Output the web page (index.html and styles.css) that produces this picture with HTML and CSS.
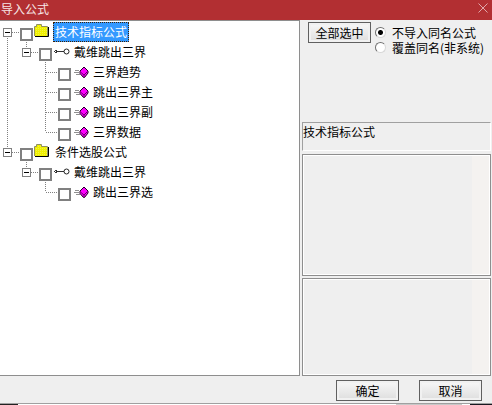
FILE: index.html
```html
<!DOCTYPE html>
<html lang="zh-CN">
<head>
    <meta charset="UTF-8">
    <meta name="viewport" content="width=device-width, initial-scale=1.0">
    <title>导入公式</title>
    <link rel="stylesheet" href="styles.css">
</head>
<body>
    <!-- Shared icons -->
    <svg class="symbols" aria-hidden="true">
        <defs>
            <pattern id="hatch" width="2" height="2" patternUnits="userSpaceOnUse">
                <path d="M0 0H2V2H0Z" fill="#f0f000"/>
                <path d="M0 0H1V1H0Z" fill="#f4f440"/>
            </pattern>
        </defs>
        <symbol id="folder" viewBox="0 0 17 15">
            <path d="M1 2H3V1H7V2H8V3H14V12H1Z" fill="url(#hatch)" shape-rendering="crispEdges"/>
            <path d="M.5 12V2.5H2.5V.5H7.5V2.5H13.5V12" fill="none" stroke="#909060"/>
            <path d="M1 12.5H14.5V3" fill="none" stroke="#000"/>
        </symbol>
        <symbol id="group" viewBox="0 0 17 15">
            <path d="M2 6.5H4M1 7.5H11M2 8.5H4" fill="none" stroke="#333" shape-rendering="crispEdges"/>
            <path d="M2 7H3V8H2Z" fill="#fff"/>
            <circle cx="13.5" cy="7.5" r="2.5" fill="#fff" stroke="#222"/>
        </symbol>
        <symbol id="formula" viewBox="0 0 17 15">
            <path d="M3 6.5H7M2 8.5H7M4 10.5H8" fill="none" stroke="#909090" shape-rendering="crispEdges"/>
            <path d="M12 3L16 7V9L12.500 13.500H11.500L8 9.500V7Z" fill="#f0f" stroke="#200020"/>
            <path d="M9 8.500L12 11L15.500 7.500M12 11V13" fill="none" stroke="#700070"/>
        </symbol>
    </svg>

    <header class="titlebar">
        <h1>导入公式</h1>
        <button type="button" class="close" aria-label="关闭">
            <svg viewBox="0 0 10 10"><path d="M.5 .5L9.5 9.5M9.5 .5L.5 9.5"/></svg>
        </button>
    </header>

    <main class="content">
        <!-- Formula tree -->
        <div class="tree-panel">
            <ul class="tree">
                <li>
                    <div class="row">
                        <button type="button" class="toggle" aria-label="折叠"></button>
                        <input type="checkbox" id="n1">
                        <svg class="icon"><use href="#folder"/></svg>
                        <label for="n1" class="selected">技术指标公式</label>
                    </div>
                    <ul>
                        <li>
                            <div class="row">
                                <button type="button" class="toggle" aria-label="折叠"></button>
                                <input type="checkbox" id="n2">
                                <svg class="icon"><use href="#group"/></svg>
                                <label for="n2">戴维跳出三界</label>
                            </div>
                            <ul>
                                <li>
                                    <div class="row leaf">
                                        <input type="checkbox" id="n3">
                                        <svg class="icon"><use href="#formula"/></svg>
                                        <label for="n3">三界趋势</label>
                                    </div>
                                </li>
                                <li>
                                    <div class="row leaf">
                                        <input type="checkbox" id="n4">
                                        <svg class="icon"><use href="#formula"/></svg>
                                        <label for="n4">跳出三界主</label>
                                    </div>
                                </li>
                                <li>
                                    <div class="row leaf">
                                        <input type="checkbox" id="n5">
                                        <svg class="icon"><use href="#formula"/></svg>
                                        <label for="n5">跳出三界副</label>
                                    </div>
                                </li>
                                <li>
                                    <div class="row leaf">
                                        <input type="checkbox" id="n6">
                                        <svg class="icon"><use href="#formula"/></svg>
                                        <label for="n6">三界数据</label>
                                    </div>
                                </li>
                            </ul>
                        </li>
                    </ul>
                </li>
                <li>
                    <div class="row">
                        <button type="button" class="toggle" aria-label="折叠"></button>
                        <input type="checkbox" id="n7">
                        <svg class="icon"><use href="#folder"/></svg>
                        <label for="n7">条件选股公式</label>
                    </div>
                    <ul>
                        <li>
                            <div class="row">
                                <button type="button" class="toggle" aria-label="折叠"></button>
                                <input type="checkbox" id="n8">
                                <svg class="icon"><use href="#group"/></svg>
                                <label for="n8">戴维跳出三界</label>
                            </div>
                            <ul>
                                <li>
                                    <div class="row leaf">
                                        <input type="checkbox" id="n9">
                                        <svg class="icon"><use href="#formula"/></svg>
                                        <label for="n9">跳出三界选</label>
                                    </div>
                                </li>
                            </ul>
                        </li>
                    </ul>
                </li>
            </ul>
        </div>

        <!-- Options and details -->
        <div class="side">
            <div class="options">
                <button type="button" class="btn">全部选中</button>
                <div class="radios">
                    <div class="radio">
                        <input type="radio" name="mode" id="skip" checked>
                        <label for="skip">不导入同名公式</label>
                    </div>
                    <div class="radio">
                        <input type="radio" name="mode" id="overwrite">
                        <label for="overwrite">覆盖同名(非系统)</label>
                    </div>
                </div>
            </div>
            <div class="summary">技术指标公式</div>
            <textarea class="detail params" aria-label="参数" readonly></textarea>
            <textarea class="detail notes" aria-label="说明" readonly></textarea>
        </div>
    </main>

    <footer class="actions">
        <button type="button" class="btn">确定</button>
        <button type="button" class="btn">取消</button>
    </footer>
    <div class="edge"></div>
</body>
</html>
```

FILE: styles.css
```css
* {
    box-sizing: border-box;
}
body {
    display: flex;
    flex-direction: column;
    min-height: 100vh;
    margin: 0;
    background: #efefef;
    color: #000;
    font-family: "Noto Sans CJK SC", sans-serif;
    font-size: 12px;
    line-height: 18px;
}
button,
input,
textarea {
    margin: 0;
    padding: 0;
    font: inherit;
    color: inherit;
}
.symbols {
    position: absolute;
    width: 0;
    height: 0;
}

/* Title bar */
.titlebar {
    display: flex;
    justify-content: space-between;
    align-items: center;
    height: 20px;
    padding: 0 4px 0 1px;
    background: #b22f32;
    color: #f7e6e6;
}
.titlebar h1 {
    margin: 0;
    padding-bottom: 2px;
    font-size: 12px;
    font-weight: normal;
}
.close {
    display: flex;
    padding-bottom: 5px;
    border: 0;
    background: none;
}
.close svg {
    width: 10px;
    height: 10px;
    fill: none;
    stroke: #e0a8aa;
}

.content {
    flex: 1;
    display: grid;
    grid-template-columns: 1fr 189px;
    gap: 2px;
    padding-right: 1px;
}

/* Tree */
.tree-panel {
    padding-top: 1px;
    background: #fff;
    border: 1px solid #8e8e8e;
    border-left: 0;
}
.tree,
.tree ul {
    margin: 0;
    padding: 0;
    list-style: none;
}
.tree ul {
    padding-left: 19px;
}
.tree li {
    background: repeating-linear-gradient(#808080 0 1px, transparent 1px 2px) no-repeat 7px 0 / 1px 100%;
}
.tree > li:first-child {
    background-position: 7px 10px;
}
.tree li:last-child {
    background-size: 1px 10px;
}
.row {
    display: flex;
    align-items: flex-start;
    height: 20px;
    padding-left: 3px;
    background: repeating-linear-gradient(90deg, #808080 0 1px, transparent 1px 2px) no-repeat 8px 10px / 11px 1px;
}
.row.leaf {
    padding-left: 20px;
}
.toggle {
    width: 9px;
    height: 9px;
    margin: 6px 8px 0 0;
    border: 1px solid #808080;
    background: linear-gradient(#000, #000) no-repeat center / 5px 1px #fff;
}
.row input {
    appearance: none;
    width: 13px;
    height: 13px;
    margin-top: 6px;
    border: 2px solid #808080;
    background: #fff;
}
.row input:checked {
    background: #808080;
}
.icon {
    width: 17px;
    height: 15px;
    margin: 2px 2px 0 1px;
}
.row label {
    padding: 0 1px;
    border: 1px solid transparent;
}
.row .selected {
    background: #3399ff;
    border: 1px dotted #402000;
    color: #fff;
}

/* Right side */
.side {
    display: flex;
    flex-direction: column;
}
.options {
    display: flex;
    align-items: flex-start;
    gap: 4px;
    min-height: 102px;
    padding: 2px 0 0 6px;
}
.btn {
    width: 63px;
    height: 21px;
    border: 1px solid #606060;
    background: linear-gradient(#f8f8f8, #dedede);
    box-shadow: inset 0 0 0 2px #f1f1f1;
    line-height: 17px;
    white-space: nowrap;
}
.radios {
    padding-top: 3px;
}
.radio {
    display: flex;
    align-items: center;
    gap: 6px;
    height: 15px;
    line-height: 15px;
    white-space: nowrap;
}
.radio input {
    appearance: none;
    width: 11px;
    height: 11px;
    border: 1px solid;
    border-color: #707070 #d8d8d8 #d8d8d8 #707070;
    border-radius: 50%;
    background: #fff;
}
.radio input:checked {
    background: radial-gradient(circle, #000 2px, #fff 3px);
}
.summary {
    height: 29px;
    margin-bottom: 3px;
    border: 1px solid;
    border-color: #a0a0a0 #fff #fff #a0a0a0;
}
.detail {
    display: block;
    width: 100%;
    min-height: 0;
    border: 1px solid #8e8e8e;
    border-radius: 0;
    outline: 0;
    resize: none;
    background: linear-gradient(90deg, transparent calc(100% - 18px), #f4f2f0 0) #efefef;
    box-shadow: inset 0 0 0 1px #fff;
}
.params {
    flex: 122;
    margin-bottom: 2px;
}
.notes {
    flex: 98;
}

/* Bottom buttons */
.actions {
    display: flex;
    justify-content: flex-end;
    gap: 20px;
    height: 27px;
    padding: 4px 10px 0 0;
}
.edge {
    height: 2px;
    border-top: 1px solid #a0a0a0;
    background: linear-gradient(90deg, #222 18px, #fff 0 calc(100% - 96px), #c8c8c8 0 calc(100% - 30px), #fff 0 calc(100% - 22px), #181820 0);
}
```
